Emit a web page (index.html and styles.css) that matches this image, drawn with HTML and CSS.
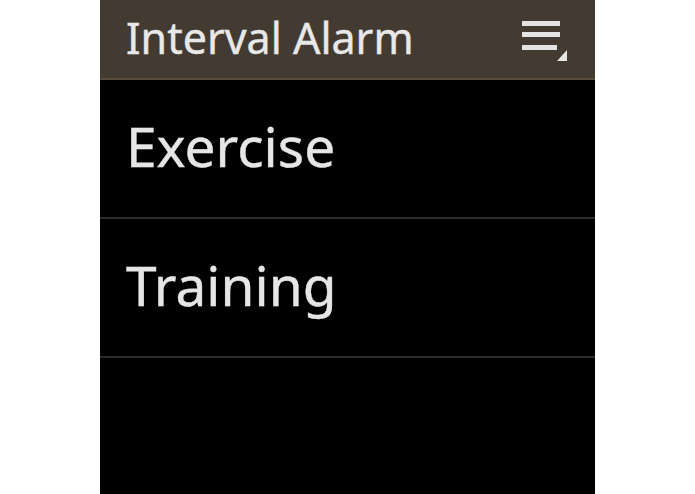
FILE: index.html
```html
<!DOCTYPE html>
<html lang="en">
<head>
<meta charset="utf-8">
<title>Interval Alarm</title>
<link rel="stylesheet" href="styles.css">
</head>
<body>
<div class="screen">
  <header class="app-bar">
    <h1 class="app-title">Interval Alarm</h1>
    <svg class="menu-icon" width="48" height="44" viewBox="0 0 48 44" aria-hidden="true">
      <rect x="0" y="2" width="38" height="5" fill="#e4e4e4"/>
      <rect x="0" y="13" width="38" height="5" fill="#e4e4e4"/>
      <rect x="0" y="26" width="35" height="5" fill="#e4e4e4"/>
      <polygon points="45,31 45,42 35,42" fill="#e4e4e4"/>
    </svg>
  </header>
  <ul class="list">
    <li class="list-item">Exercise</li>
    <li class="list-item">Training</li>
  </ul>
</div>
</body>
</html>
```
FILE: styles.css
```css
html, body {
  margin: 0;
  padding: 0;
  background: #ffffff;
  height: 100%;
}

.screen {
  width: 495px;
  height: 494px;
  margin: 0 auto 0 100px;
  background: #000000;
  font-family: "Noto Sans", "Open Sans", sans-serif;
  color: #e6e6e6;
  overflow: hidden;
}

.app-bar {
  height: 78px;
  background: #433a31;
  border-bottom: 2px solid #5b4c3d;
  display: flex;
  align-items: center;
  justify-content: space-between;
  padding: 0 26px 0 26px;
}

.app-title {
  margin: 0;
  font-size: 43px;
  font-weight: 400;
  color: #e8e8e8;
  line-height: 1;
  padding-bottom: 4px;
  -webkit-text-stroke: 0.4px #e8e8e8;
}

.menu-icon {
  display: block;
  margin-top: 4px;
  margin-right: -1px;
}

.list {
  list-style: none;
  margin: 0;
  padding: 0;
}

.list-item {
  box-sizing: border-box;
  height: 139px;
  border-bottom: 2px solid #2c2c2c;
  display: flex;
  align-items: center;
  padding: 0 26px 6px 26px;
  font-size: 55px;
  color: #e6e6e6;
  -webkit-text-stroke: 0.4px #e6e6e6;
}
```
